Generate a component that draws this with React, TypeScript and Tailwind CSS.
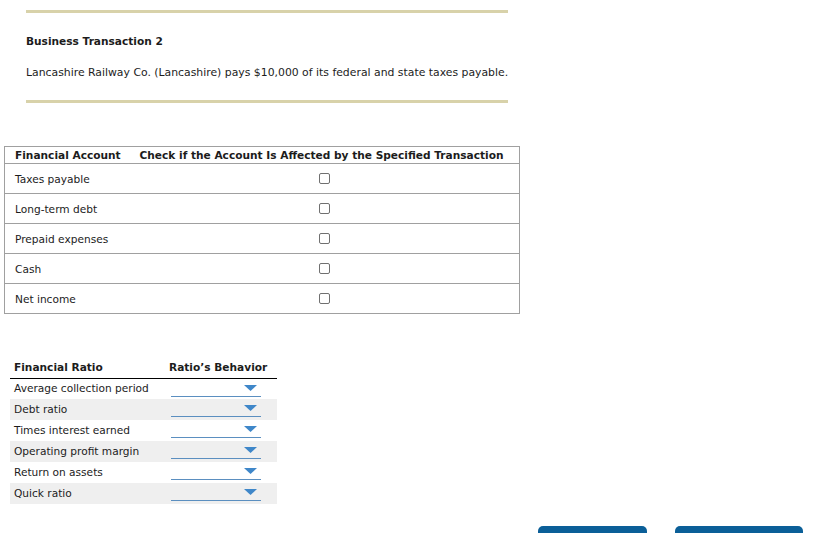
import React from "react";

const accounts = ["Taxes payable", "Long-term debt", "Prepaid expenses", "Cash", "Net income"];

const ratios = [
  "Average collection period",
  "Debt ratio",
  "Times interest earned",
  "Operating profit margin",
  "Return on assets",
  "Quick ratio",
];

function Dropdown() {
  return (
    <div className="relative ml-[6px] h-[18px] w-[90px] border-b border-[#5b8fc0]">
      <svg
        className="absolute right-[4px] top-[6px]"
        width="13"
        height="6"
        viewBox="0 0 13 6"
      >
        <polygon points="0,0 13,0 6.5,6" fill="#3f87c9" />
      </svg>
    </div>
  );
}

export default function App() {
  return (
    <div
      className="relative h-[533px] w-[825px] overflow-hidden whitespace-nowrap bg-white text-[10.6px] text-[#1c1c1c]"
      style={{ fontFamily: "'DejaVu Sans', Verdana, sans-serif" }}
    >
      {/* Transaction */}
      <div className="box-content w-[482px] pl-[26px] pt-[10px]">
        <div className="h-[3px] bg-[#d8d2aa]" />
        <div className="mt-[21px] font-bold leading-[14px]">Business Transaction 2</div>
        <div className="mt-[18px] text-[10.85px] leading-[14px]">
          Lancashire Railway Co. (Lancashire) pays $10,000 of its federal and state taxes payable.
        </div>
        <div className="mt-[20px] h-[3px] bg-[#d8d2aa]" />
      </div>

      {/* Accounts table */}
      <table className="ml-[4px] mt-[43px] w-[516px] border-collapse border border-[#a0a0a0]">
        <thead>
          <tr className="h-[17px]">
            <th className="w-[126px] pl-[10px] text-left font-bold leading-[14px]">Financial Account</th>
            <th className="pl-[9px] pr-[10px] text-left font-bold leading-[14px]">
              Check if the Account Is Affected by the Specified Transaction
            </th>
          </tr>
        </thead>
        <tbody>
          {accounts.map((a) => (
            <tr key={a} className="h-[30px] border-t border-[#a0a0a0]">
              <td className="pl-[10px] pt-[2px] align-middle">{a}</td>
              <td className="text-center align-middle">
                <span className="inline-block h-[11px] w-[11px] rounded-[2px] border border-[#707070] bg-white align-middle" />
              </td>
            </tr>
          ))}
        </tbody>
      </table>

      {/* Ratios table */}
      <table className="ml-[10px] mt-[44px] w-[267px] border-collapse">
        <thead>
          <tr className="h-[20px] border-b border-black">
            <th className="w-[155px] pl-[4px] pb-[2px] text-left align-bottom font-bold">Financial Ratio</th>
            <th className="pl-[4px] pb-[2px] text-left align-bottom font-bold">Ratio’s Behavior</th>
          </tr>
        </thead>
        <tbody>
          {ratios.map((r, i) => (
            <tr key={r} className={i % 2 === 1 ? "h-[21px] bg-[#efefef]" : "h-[21px]"}>
              <td className="pl-[4px] align-middle">{r}</td>
              <td className="align-top">
                <Dropdown />
              </td>
            </tr>
          ))}
        </tbody>
      </table>

      {/* Footer buttons */}
      <div className="mt-[22px] flex gap-[28px] pl-[538px]">
        <button className="h-[36px] w-[109px] rounded-t-[5px] bg-[#0b5f98]" />
        <button className="h-[36px] w-[128px] rounded-t-[5px] bg-[#0b5f98]" />
      </div>
    </div>
  );
}
